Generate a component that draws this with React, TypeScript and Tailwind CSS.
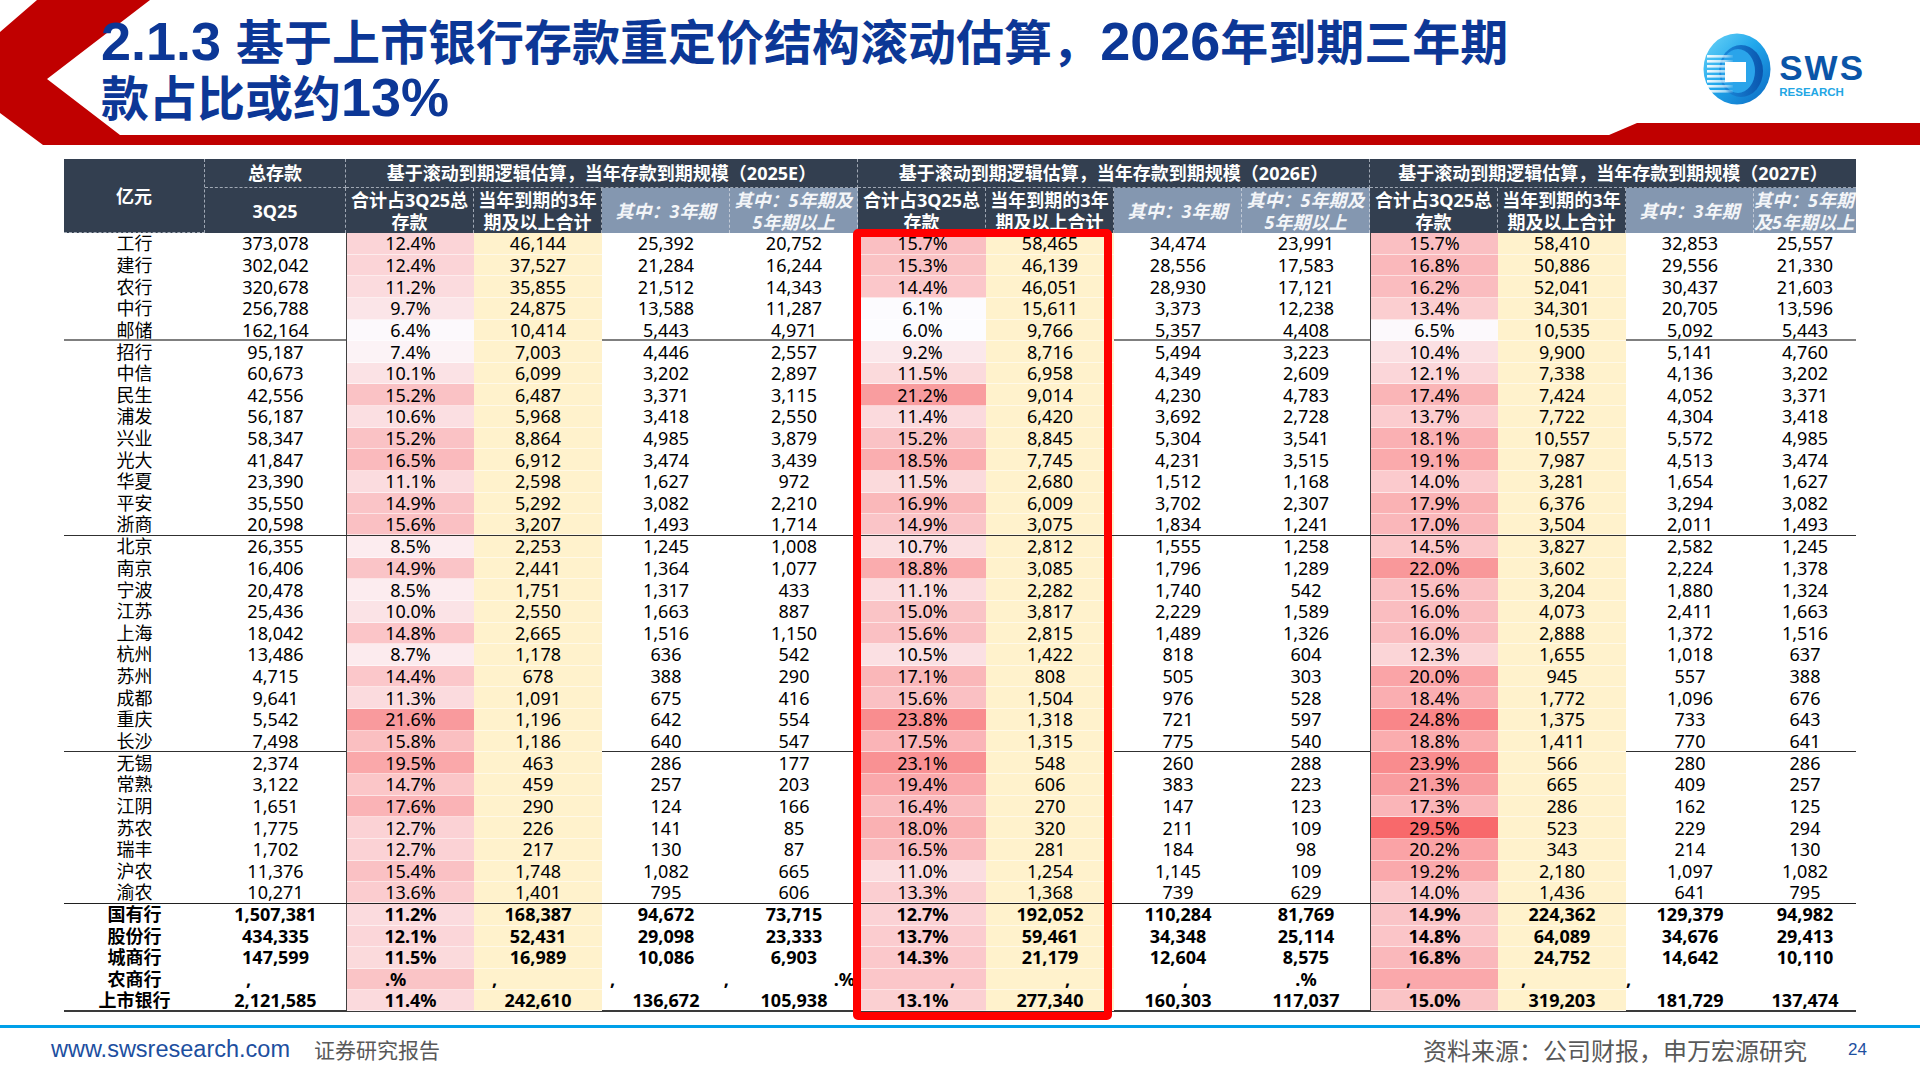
import React from 'react';

const DATA = `工行|373,078|12.4%|46,144|25,392|20,752|15.7%|58,465|34,474|23,991|15.7%|58,410|32,853|25,557
建行|302,042|12.4%|37,527|21,284|16,244|15.3%|46,139|28,556|17,583|16.8%|50,886|29,556|21,330
农行|320,678|11.2%|35,855|21,512|14,343|14.4%|46,051|28,930|17,121|16.2%|52,041|30,437|21,603
中行|256,788|9.7%|24,875|13,588|11,287|6.1%|15,611|3,373|12,238|13.4%|34,301|20,705|13,596
邮储|162,164|6.4%|10,414|5,443|4,971|6.0%|9,766|5,357|4,408|6.5%|10,535|5,092|5,443
招行|95,187|7.4%|7,003|4,446|2,557|9.2%|8,716|5,494|3,223|10.4%|9,900|5,141|4,760
中信|60,673|10.1%|6,099|3,202|2,897|11.5%|6,958|4,349|2,609|12.1%|7,338|4,136|3,202
民生|42,556|15.2%|6,487|3,371|3,115|21.2%|9,014|4,230|4,783|17.4%|7,424|4,052|3,371
浦发|56,187|10.6%|5,968|3,418|2,550|11.4%|6,420|3,692|2,728|13.7%|7,722|4,304|3,418
兴业|58,347|15.2%|8,864|4,985|3,879|15.2%|8,845|5,304|3,541|18.1%|10,557|5,572|4,985
光大|41,847|16.5%|6,912|3,474|3,439|18.5%|7,745|4,231|3,515|19.1%|7,987|4,513|3,474
华夏|23,390|11.1%|2,598|1,627|972|11.5%|2,680|1,512|1,168|14.0%|3,281|1,654|1,627
平安|35,550|14.9%|5,292|3,082|2,210|16.9%|6,009|3,702|2,307|17.9%|6,376|3,294|3,082
浙商|20,598|15.6%|3,207|1,493|1,714|14.9%|3,075|1,834|1,241|17.0%|3,504|2,011|1,493
北京|26,355|8.5%|2,253|1,245|1,008|10.7%|2,812|1,555|1,258|14.5%|3,827|2,582|1,245
南京|16,406|14.9%|2,441|1,364|1,077|18.8%|3,085|1,796|1,289|22.0%|3,602|2,224|1,378
宁波|20,478|8.5%|1,751|1,317|433|11.1%|2,282|1,740|542|15.6%|3,204|1,880|1,324
江苏|25,436|10.0%|2,550|1,663|887|15.0%|3,817|2,229|1,589|16.0%|4,073|2,411|1,663
上海|18,042|14.8%|2,665|1,516|1,150|15.6%|2,815|1,489|1,326|16.0%|2,888|1,372|1,516
杭州|13,486|8.7%|1,178|636|542|10.5%|1,422|818|604|12.3%|1,655|1,018|637
苏州|4,715|14.4%|678|388|290|17.1%|808|505|303|20.0%|945|557|388
成都|9,641|11.3%|1,091|675|416|15.6%|1,504|976|528|18.4%|1,772|1,096|676
重庆|5,542|21.6%|1,196|642|554|23.8%|1,318|721|597|24.8%|1,375|733|643
长沙|7,498|15.8%|1,186|640|547|17.5%|1,315|775|540|18.8%|1,411|770|641
无锡|2,374|19.5%|463|286|177|23.1%|548|260|288|23.9%|566|280|286
常熟|3,122|14.7%|459|257|203|19.4%|606|383|223|21.3%|665|409|257
江阴|1,651|17.6%|290|124|166|16.4%|270|147|123|17.3%|286|162|125
苏农|1,775|12.7%|226|141|85|18.0%|320|211|109|29.5%|523|229|294
瑞丰|1,702|12.7%|217|130|87|16.5%|281|184|98|20.2%|343|214|130
沪农|11,376|15.4%|1,748|1,082|665|11.0%|1,254|1,145|109|19.2%|2,180|1,097|1,082
渝农|10,271|13.6%|1,401|795|606|13.3%|1,368|739|629|14.0%|1,436|641|795`;

const SUMMARY = `国有行|1,507,381|11.2%|168,387|94,672|73,715|12.7%|192,052|110,284|81,769|14.9%|224,362|129,379|94,982
股份行|434,335|12.1%|52,431|29,098|23,333|13.7%|59,461|34,348|25,114|14.8%|64,089|34,676|29,413
城商行|147,599|11.5%|16,989|10,086|6,903|14.3%|21,179|12,604|8,575|16.8%|24,752|14,642|10,110`;

const TOTAL = '上市银行|2,121,585|11.4%|242,610|136,672|105,938|13.1%|277,340|160,303|117,037|15.0%|319,203|181,729|137,474';

const COLS = 'grid grid-cols-[141px_141px_repeat(11,128px)_102px]';

function heat(v: number) {
  const t = Math.max(0, Math.min(1, (v - 6.0) / (29.5 - 6.0)));
  const r = Math.round(252 + (248 - 252) * t);
  const g = Math.round(252 + (105 - 252) * t);
  const b = Math.round(255 + (107 - 255) * t);
  return `rgb(${r},${g},${b})`;
}

const isPct = (i: number) => i === 2 || i === 6 || i === 10;
const isTot = (i: number) => i === 3 || i === 7 || i === 11;

function cellBase(i: number) {
  let c = 'flex items-center whitespace-nowrap';
  if (isPct(i)) c += ' border-l border-[#404040] shadow-[inset_0_-1px_0_rgba(255,255,255,0.55)]';
  if (isTot(i)) c += ' bg-[#fff2cc] shadow-[inset_0_-1px_0_rgba(255,255,255,0.55)]';
  return c;
}

function DataRow({ line, bold, border }: { line: string; bold?: boolean; border?: string }) {
  const cells = line.split('|');
  return (
    <div className={`${COLS} h-[21.65px] ${bold ? 'font-bold' : ''} ${border ?? ''}`}>
      {cells.map((c, i) => (
        <div
          key={i}
          className={`${cellBase(i)} justify-center`}
          style={isPct(i) ? { backgroundColor: heat(parseFloat(c)) } : undefined}
        >
          {c}
        </div>
      ))}
    </div>
  );
}

function GlitchRow() {
  const pctColors = [15.0, 14.6, 19.4];
  return (
    <div className={`${COLS} h-[21.65px] font-bold`}>
      <div className="flex items-center justify-center whitespace-nowrap">农商行</div>
      <div className="flex items-center pl-[41px]">,</div>
      <div className={`${cellBase(2)} pl-[38px]`} style={{ backgroundColor: heat(pctColors[0]) }}>.%</div>
      <div className={`${cellBase(3)} pl-[18px]`}>,</div>
      <div className="flex items-center justify-between pl-[8px] pr-[1px]"><span>,</span><span>,</span></div>
      <div className="flex items-center justify-end pr-[3px]">.%</div>
      <div className={`${cellBase(6)} pl-[91px]`} style={{ backgroundColor: heat(pctColors[1]) }}>,</div>
      <div className={`${cellBase(7)} pl-[79px]`}>,</div>
      <div className="flex items-center pl-[69px]">,</div>
      <div className="flex items-center justify-center">.%</div>
      <div className={`${cellBase(10)} pl-[35px]`} style={{ backgroundColor: heat(pctColors[2]) }}>,</div>
      <div className={`${cellBase(11)} pl-[23px]`}>,</div>
      <div className="flex items-center pl-[0px]">,</div>
      <div />
    </div>
  );
}

function Logo() {
  const stripes = [22, 27, 32, 37, 42, 47, 52, 57];
  return (
    <div className="flex items-start gap-[8px]">
      <svg width="68" height="72" viewBox="0 0 68 72">
        <defs>
          <linearGradient id="sws1" x1="0" y1="0" x2="1" y2="1">
            <stop offset="0" stopColor="#6fd6f8" />
            <stop offset="0.45" stopColor="#22a8ec" />
            <stop offset="1" stopColor="#0a68c2" />
          </linearGradient>
          <linearGradient id="sws2" x1="0" y1="0" x2="1" y2="0">
            <stop offset="0" stopColor="#ffffff" stopOpacity="0.95" />
            <stop offset="0.7" stopColor="#ffffff" stopOpacity="0.6" />
            <stop offset="1" stopColor="#ffffff" stopOpacity="0.1" />
          </linearGradient>
          <linearGradient id="sws3" x1="0" y1="0" x2="1" y2="0">
            <stop offset="0" stopColor="#1c8fe0" />
            <stop offset="1" stopColor="#0a55ad" />
          </linearGradient>
        </defs>
        <ellipse cx="34" cy="36" rx="33.5" ry="35.5" fill="url(#sws1)" />
        <ellipse cx="38" cy="38" rx="22" ry="26" fill="url(#sws3)" />
        <ellipse cx="35" cy="38" rx="17" ry="22" fill="#2aa4ea" />
        {stripes.map((y) => (
          <rect key={y} x="4" y={y} width="26" height="2.6" fill="url(#sws2)" />
        ))}
        <rect x="22" y="29" width="21" height="20" fill="#ffffff" />
      </svg>
      <div className="flex flex-col mt-[21px] font-['Liberation_Sans',sans-serif]">
        <div className="text-[35px] leading-[27px] font-bold tracking-[2px] text-[#0b55a8]">SWS</div>
        <div className="text-[11.5px] leading-[12px] font-bold text-[#22a6e4] mt-[5px]">RESEARCH</div>
      </div>
    </div>
  );
}

export default function App() {
  const rows = DATA.split('\n');
  const borders: Record<number, string> = {
    4: 'border-b-2 border-[#7f7f7f]',
    13: 'border-b border-[#303030]',
    23: 'border-b border-[#303030]',
    30: 'border-b border-[#202020]',
  };
  const groups = ['2025E', '2026E', '2027E'];
  return (
    <div className="w-[1920px] h-[1080px] bg-white overflow-hidden font-['Noto_Sans','Noto_Sans_CJK_SC',sans-serif] text-black">
      {/* Header */}
      <div className="relative h-[159px]">
        <svg className="absolute inset-0" width="1920" height="159" viewBox="0 0 1920 159">
          <polygon
            points="37,0 150,0 47,79 120,135 1609,135 1637,123 1920,123 1920,145 43,145 0,113 0,32"
            fill="#c00000"
          />
        </svg>
        <div className="relative flex justify-between pl-[101px] pr-[55px]">
          <h1 className="pt-[12px] text-[48px] leading-[54px] font-bold text-[#0c3796] font-['Noto_Sans_CJK_SC',sans-serif]">
            <span className="font-['Liberation_Sans',sans-serif] text-[54px]">2.1.3 </span>
            基于上市银行存款重定价结构滚动估算，
            <span className="font-['Liberation_Sans',sans-serif] text-[54px]">2026</span>
            年到期三年期
            <br />
            款占比或约
            <span className="font-['Liberation_Sans',sans-serif] text-[54px]">13%</span>
          </h1>
          <div className="mt-[33px]">
            <Logo />
          </div>
        </div>
      </div>

      {/* Table */}
      <div className="relative ml-[64px] w-[1792px]">
        <div className={`${COLS} grid-rows-[29px_45px] bg-[#333F50] text-white font-bold text-[18px] leading-[22px] font-['Noto_Sans','Noto_Sans_CJK_SC',sans-serif]`}>
          <div className="row-span-2 flex items-center justify-center border-r border-b border-dashed border-[#a0a8b4]">亿元</div>
          <div className="flex items-center justify-center border-r border-b border-dashed border-[#a0a8b4]">总存款</div>
          {groups.map((g, gi) => (
            <div
              key={g}
              className={`col-span-4 flex items-center justify-center whitespace-nowrap border-b border-dashed border-[#a0a8b4] ${gi < 2 ? 'border-r' : ''}`}
            >
              基于滚动到期逻辑估算，当年存款到期规模（{g}）
            </div>
          ))}
          <div className="flex items-center justify-center border-r border-dashed border-[#a0a8b4]">3Q25</div>
          {groups.map((g, gi) => (
            <React.Fragment key={g}>
              <div className="flex flex-col items-center justify-center text-center border-r border-dashed border-[#a0a8b4] whitespace-nowrap">
                <span>合计占3Q25总</span>
                <span>存款</span>
              </div>
              <div className="flex flex-col items-center justify-center text-center border-r border-dashed border-[#a0a8b4] whitespace-nowrap">
                <span>当年到期的3年</span>
                <span>期及以上合计</span>
              </div>
              <div className="flex items-center justify-center bg-[#8497B0] italic text-[#f3f5f8] border-r border-dashed border-[#c2cad6] whitespace-nowrap">
                其中：3年期
              </div>
              {gi < 2 ? (
                <div className="flex flex-col items-center justify-center bg-[#8497B0] italic text-[#f3f5f8] border-r border-dashed border-[#c2cad6] whitespace-nowrap">
                  <span>其中：5年期及</span>
                  <span>5年期以上</span>
                </div>
              ) : (
                <div className="flex flex-col items-start justify-center bg-[#8497B0] italic text-[#f3f5f8] whitespace-nowrap overflow-hidden">
                  <span>其中：5年期</span>
                  <span>及5年期以上</span>
                </div>
              )}
            </React.Fragment>
          ))}
        </div>

        <div className="text-[18px] leading-[21px]">
          {rows.map((r, i) => (
            <DataRow key={i} line={r} border={borders[i]} />
          ))}
          {SUMMARY.split('\n').map((r, i) => (
            <DataRow key={'s' + i} line={r} bold />
          ))}
          <GlitchRow />
          <DataRow line={TOTAL} bold border="border-b-2 border-[#3a3a3a]" />
        </div>

        <div className="absolute left-[789px] top-[70px] w-[259px] h-[791px] border-[8px] border-[#ff0000] rounded-[5px]" />
      </div>

      {/* Footer */}
      <div className="mt-[13px] h-[3px] bg-[#00a0e9]" />
      <div className="flex items-center justify-between h-[48px] pl-[51px] pr-[53px] pb-[4px]">
        <div className="flex items-center gap-[24px]">
          <span className="font-['Liberation_Sans',sans-serif] text-[23.5px] text-[#1d4f9f]">www.swsresearch.com</span>
          <span className="font-['Noto_Sans_CJK_SC',sans-serif] text-[21px] text-[#595959]">证券研究报告</span>
        </div>
        <div className="flex items-center gap-[41px]">
          <span className="font-['Noto_Sans_CJK_SC',sans-serif] text-[24px] text-[#595959]">资料来源：公司财报，申万宏源研究</span>
          <span className="font-['Liberation_Sans',sans-serif] text-[17px] text-[#1d4f9f]">24</span>
        </div>
      </div>
    </div>
  );
}
